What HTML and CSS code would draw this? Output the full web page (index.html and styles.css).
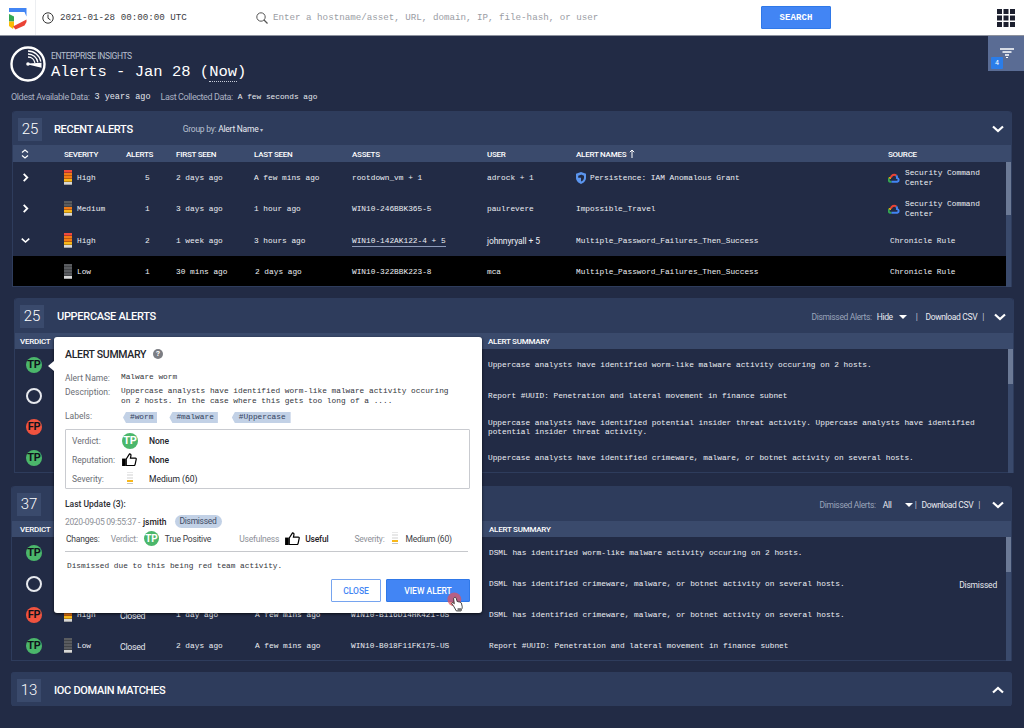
FILE: index.html
```html
<!DOCTYPE html>
<html lang="en">
<head>
<meta charset="utf-8">
<title>Alerts - Enterprise Insights</title>
<link rel="stylesheet" href="styles.css">
</head>
<body>
<svg class="sprite" aria-hidden="true">
  <symbol id="chev-r" viewBox="0 0 10 10"><path d="M3 1l4 4-4 4" fill="none" stroke="#fff" stroke-width="2"/></symbol>
  <symbol id="chev-d" viewBox="0 0 12 8"><path d="M1 1.500l5 4.500 5-4.500" fill="none" stroke="#fff" stroke-width="2.200"/></symbol>
  <symbol id="chev-u" viewBox="0 0 12 8"><path d="M1 6.500l5-4.500 5 4.500" fill="none" stroke="#fff" stroke-width="2.200"/></symbol>
  <symbol id="gcloud" viewBox="0 0 12 10">
    <path d="M3.500 8.800H2.600A2 2 0 0 1 1.300 5.300" fill="none" stroke="#34a853" stroke-width="2"/>
    <path d="M1.300 5.400A2.300 2.300 0 0 1 3 4.700" fill="none" stroke="#fbbc05" stroke-width="2"/>
    <path d="M3 4.800A3.200 3.200 0 0 1 8.300 2.500" fill="none" stroke="#ea4335" stroke-width="2"/>
    <path d="M8.300 2.500A3 3 0 0 1 9 4.900 2 2 0 0 1 9.200 8.800H3.500" fill="none" stroke="#4285f4" stroke-width="2"/>
  </symbol>
  <symbol id="thumb" viewBox="0 0 16 14">
    <path d="M0 6h4v8H0z" fill="#000"/>
    <path d="M4.500 6.500L8 1c1.200 0 1.800.8 1.500 2L9 5.500h5.200c.8 0 1.200.6 1 1.300L14 12.500c-.2.700-.6 1-1.200 1H4.500z" fill="#fff" stroke="#000" stroke-width="1.300"/>
  </symbol>
</svg>

<header class="topbar">
  <div class="logo-cell">
    <svg class="logo" viewBox="0 0 18 22" aria-label="Chronicle logo">
      <path d="M0 0h17.500v4H0z" fill="#4285f4"/>
      <path d="M15.500 4h2v4.500z" fill="#4285f4"/>
      <path d="M0 6l5 2.500v5H0z" fill="#34a853"/>
      <path d="M0 13.500h5v4.500l-1 3-4-3z" fill="#fbbc05"/>
      <path d="M4 18.500l13.500-7v2.500l-2 3.500L6.500 21.500z" fill="#ea4335"/>
    </svg>
  </div>
  <svg class="clock" viewBox="0 0 12 12"><circle cx="6" cy="6" r="5.200" fill="none" stroke="#333" stroke-width="1"/><path d="M6 2.500V6.200L8.500 8" fill="none" stroke="#333" stroke-width="1"/></svg>
  <span class="when">2021-01-28 00:00:00 UTC</span>
  <svg class="lens" viewBox="0 0 12 12"><circle cx="5" cy="5" r="4.200" fill="none" stroke="#555" stroke-width="1"/><path d="M8 8l3.500 3.500" stroke="#555" stroke-width="1.200"/></svg>
  <span class="placeholder">Enter a hostname/asset, URL, domain, IP, file-hash, or user</span>
  <button class="search-btn">SEARCH</button>
  <svg class="apps" viewBox="0 0 18 18"><g fill="#1c1f2e"><rect width="5" height="5"/><rect x="6.500" width="5" height="5"/><rect x="13" width="5" height="5"/><rect y="6.500" width="5" height="5"/><rect x="6.500" y="6.500" width="5" height="5"/><rect x="13" y="6.500" width="5" height="5"/><rect y="13" width="5" height="5"/><rect x="6.500" y="13" width="5" height="5"/><rect x="13" y="13" width="5" height="5"/></g></svg>
</header>

<main class="page">
  <section class="intro">
    <div class="intro-left">
      <div class="headline">
        <svg class="radar" viewBox="0 0 36 36">
          <circle cx="18" cy="18" r="16.500" fill="none" stroke="#fff" stroke-width="2.400"/>
          <circle cx="18" cy="18" r="1.800" fill="#fff"/>
          <path d="M18 17.500L31.500 16.700V21.700L18 18.500z" fill="#fff"/>
          <path d="M18 5A13 13 0 0 1 30.800 15.700M18 8A10 10 0 0 1 27.800 16.300M18 11A7 7 0 0 1 24.900 16.800" fill="none" stroke="#fff" stroke-width="1.300"/>
        </svg>
        <div>
          <div class="eyebrow">ENTERPRISE INSIGHTS</div>
          <h1>Alerts - Jan 28 (<span class="now">Now</span>)</h1>
        </div>
      </div>
      <div class="meta">
        <span class="meta-key">Oldest Available Data:</span><span class="meta-val big">3 years ago</span>
        <span class="meta-key second">Last Collected Data:</span><span class="meta-val">A few seconds ago</span>
      </div>
    </div>
    <div class="filter-btn">
      <svg class="filter-ico" viewBox="0 0 14 10"><path d="M0 1h14M2.500 4h9M5 7h4" stroke="#fff" stroke-width="1.300"/><path d="M6 9.500h2" stroke="#fff"/></svg>
      <span class="filter-badge">4</span>
    </div>
  </section>

  <section class="panel panel-recent">
    <div class="panel-head">
      <span class="count">25</span>
      <h2>RECENT ALERTS</h2>
      <span class="group-by">Group by: <b>Alert Name</b> <span class="tiny-caret">▾</span></span>
      <svg class="head-chev"><use href="#chev-d"/></svg>
    </div>
    <div class="cols cols-recent subhead">
      <span class="sort-cell"><svg class="sort" viewBox="0 0 8 10"><path d="M1 3.500L4 1l3 2.500M1 6.500L4 9l3-2.500" fill="none" stroke="#fff" stroke-width="1.200"/></svg></span>
      <span>SEVERITY</span><span>ALERTS</span><span>FIRST SEEN</span><span>LAST SEEN</span><span>ASSETS</span><span>USER</span>
      <span>ALERT NAMES <svg class="up-arrow" viewBox="0 0 6 9"><path d="M3 9V1M.8 3.200L3 1l2.200 2.200" fill="none" stroke="#fff"/></svg></span>
      <span>SOURCE</span>
    </div>
    <div class="panel-body">
      <div class="rows">
        <div class="cols cols-recent row">
          <span class="exp"><svg class="chev-sm"><use href="#chev-r"/></svg></span>
          <span class="sev-cell"><span class="sev"><i class="r"></i><i class="o"></i><i class="o"></i><i class="y"></i><i class="w"></i></span><span class="m">High</span></span>
          <span class="m num">5</span><span class="m">2 days ago</span><span class="m">A few mins ago</span><span class="m">rootdown_vm + 1</span><span class="m">adrock + 1</span>
          <span class="name-cell"><svg class="shield" viewBox="0 0 10 12"><path d="M5 0l5 1.800v4C10 9 7.500 11 5 12 2.500 11 0 9 0 5.800v-4z" fill="#5b95ee"/><path d="M5 2.500L8 3.700v2C8 7.500 6.500 9 5 9.500z" fill="#222b45"/><path d="M5 5.800H2.200V3.800L5 2.700z" fill="#222b45"/></svg><span class="m">Persistence: IAM Anomalous Grant</span></span>
          <span class="src-cell"><svg class="gc"><use href="#gcloud"/></svg><span class="m wrap">Security Command Center</span></span>
        </div>
        <div class="cols cols-recent row">
          <span class="exp"><svg class="chev-sm"><use href="#chev-r"/></svg></span>
          <span class="sev-cell"><span class="sev"><i class="g"></i><i class="g"></i><i class="o"></i><i class="y"></i><i class="w"></i></span><span class="m">Medium</span></span>
          <span class="m num">1</span><span class="m">3 days ago</span><span class="m">1 hour ago</span><span class="m">WIN10-246BBK365-5</span><span class="m">paulrevere</span>
          <span class="m">Impossible_Travel</span>
          <span class="src-cell"><svg class="gc"><use href="#gcloud"/></svg><span class="m wrap">Security Command Center</span></span>
        </div>
        <div class="cols cols-recent row row-tall">
          <span class="exp"><svg class="chev-sm"><use href="#chev-d"/></svg></span>
          <span class="sev-cell"><span class="sev"><i class="r"></i><i class="o"></i><i class="o"></i><i class="y"></i><i class="w"></i></span><span class="m">High</span></span>
          <span class="m num">2</span><span class="m">1 week ago</span><span class="m">3 hours ago</span><span class="m link">WIN10-142AK122-4 + 5</span><span class="m mix">johnnyryall + 5</span>
          <span class="m">Multiple_Password_Failures_Then_Success</span>
          <span class="m src-plain">Chronicle Rule</span>
        </div>
        <div class="cols cols-recent row row-active">
          <span></span>
          <span class="sev-cell"><span class="sev"><i class="g"></i><i class="g"></i><i class="g"></i><i class="g"></i><i class="w"></i></span><span class="m">Low</span></span>
          <span class="m num">1</span><span class="m">30 mins ago</span><span class="m nudge">2 days ago</span><span class="m">WIN10-322BBK223-8</span><span class="m">mca</span>
          <span class="m">Multiple_Password_Failures_Then_Success</span>
          <span class="m src-plain">Chronicle Rule</span>
        </div>
      </div>
      <div class="scroll"><div class="thumb thumb-recent"></div></div>
    </div>
  </section>

  <section class="panel panel-upper">
    <div class="panel-head">
      <span class="count">25</span>
      <h2>UPPERCASE ALERTS</h2>
      <div class="head-tools">
        <span class="tool-key">Dismissed Alerts:</span><span class="tool-val">Hide</span><span class="caret"></span><span class="pipe">|</span><span class="tool-val">Download CSV</span><span class="pipe near">|</span>
      </div>
      <svg class="head-chev"><use href="#chev-d"/></svg>
    </div>
    <div class="cols cols-upper subhead"><span class="pad-verdict">VERDICT</span><span>ALERT SUMMARY</span></div>
    <div class="panel-body">
      <div class="rows">
        <div class="cols cols-upper row"><span class="verdict-cell"><span class="v tp">TP</span></span><span class="m">Uppercase analysts have identified worm-like malware activity occuring on 2 hosts.</span></div>
        <div class="cols cols-upper row"><span class="verdict-cell"><span class="v none"></span></span><span class="m">Report #UUID: Penetration and lateral movement in finance subnet</span></div>
        <div class="cols cols-upper row"><span class="verdict-cell"><span class="v fp">FP</span></span><span class="m wrap-long">Uppercase analysts have identified potential insider threat activity. Uppercase analysts have identified potential insider threat activity.</span></div>
        <div class="cols cols-upper row"><span class="verdict-cell"><span class="v tp">TP</span></span><span class="m">Uppercase analysts have identified crimeware, malware, or botnet activity on several hosts.</span></div>
      </div>
      <div class="scroll"><div class="thumb thumb-list"></div></div>
    </div>
  </section>

  <section class="panel panel-dsml">
    <div class="panel-head">
      <span class="count">37</span>
      <div class="head-tools">
        <span class="tool-key">Dimissed Alerts:</span><span class="tool-val wide">All</span><span class="caret tight"></span><span class="pipe tight">|</span><span class="tool-val">Download CSV</span><span class="pipe near">|</span>
      </div>
      <svg class="head-chev"><use href="#chev-d"/></svg>
    </div>
    <div class="cols cols-dsml subhead"><span class="pad-verdict-d">VERDICT</span><span></span><span></span><span></span><span></span><span></span><span>ALERT SUMMARY</span><span></span></div>
    <div class="panel-body">
      <div class="rows">
        <div class="cols cols-dsml row"><span class="verdict-cell-d"><span class="v tp">TP</span></span><span></span><span></span><span></span><span></span><span></span><span class="m">DSML has identified worm-like malware activity occuring on 2 hosts.</span><span></span></div>
        <div class="cols cols-dsml row"><span class="verdict-cell-d"><span class="v none"></span></span><span></span><span></span><span></span><span></span><span></span><span class="m">DSML has identified crimeware, malware, or botnet activity on several hosts.</span><span class="status-end">Dismissed</span></div>
        <div class="cols cols-dsml row"><span class="verdict-cell-d"><span class="v fp">FP</span></span><span class="sev-cell"><span class="sev"><i class="r"></i><i class="o"></i><i class="o"></i><i class="y"></i><i class="w"></i></span><span class="m">High</span></span><span class="s">Closed</span><span class="m">1 day ago</span><span class="m">A few mins ago</span><span class="m">WIN10-B116D14HK421-US</span><span class="m">DSML has identified crimeware, malware, or botnet activity on several hosts.</span><span></span></div>
        <div class="cols cols-dsml row"><span class="verdict-cell-d"><span class="v tp">TP</span></span><span class="sev-cell"><span class="sev"><i class="g"></i><i class="g"></i><i class="g"></i><i class="g"></i><i class="w"></i></span><span class="m">Low</span></span><span class="s">Closed</span><span class="m">2 days ago</span><span class="m">A few mins ago</span><span class="m">WIN10-B018F11FK175-US</span><span class="m">Report #UUID: Penetration and lateral movement in finance subnet</span><span></span></div>
      </div>
      <div class="scroll"><div class="thumb thumb-list"></div></div>
    </div>
  </section>

  <section class="panel panel-ioc">
    <div class="panel-head">
      <span class="count">13</span>
      <h2>IOC DOMAIN MATCHES</h2>
      <svg class="head-chev"><use href="#chev-u"/></svg>
    </div>
  </section>

  <aside class="modal">
    <div class="modal-title"><h3>ALERT SUMMARY</h3><span class="help">?</span></div>
    <dl class="facts">
      <dt>Alert Name:</dt><dd class="mono">Malware worm</dd>
      <dt>Description:</dt><dd class="mono">Uppercase analysts have identified worm-like malware activity occuring on 2 hosts. In the case where this gets too long of a ....</dd>
      <dt class="labels-key">Labels:</dt><dd class="tags"><span class="tag">#worm</span><span class="tag">#malware</span><span class="tag">#Uppercase</span></dd>
    </dl>
    <div class="summary-box">
      <span class="sb-key">Verdict:</span><span class="v tp inv">TP</span><b>None</b>
      <span class="sb-key">Reputation:</span><svg class="thumb-ico"><use href="#thumb"/></svg><b>None</b>
      <span class="sb-key">Severity:</span><span class="sev light"><i class="l"></i><i class="l"></i><i class="l"></i><i class="y"></i><i class="gr"></i></span><b class="reg">Medium (60)</b>
    </div>
    <div class="last-update">Last Update (3):</div>
    <div class="update-line"><span class="stamp">2020-09-05 09:55:37 -</span><b>jsmith</b><span class="pill">Dismissed</span></div>
    <div class="changes">
      <span class="ch-label">Changes:</span>
      <span class="ch-key k-verdict">Verdict:</span><span class="v tp inv">TP</span><span class="ch-val">True Positive</span>
      <span class="ch-key k-use">Usefulness</span><svg class="thumb-ico"><use href="#thumb"/></svg><b class="ch-strong">Useful</b>
      <span class="ch-key k-sev">Severity:</span><span class="sev light"><i class="l"></i><i class="l"></i><i class="l"></i><i class="y"></i><i class="gr"></i></span><span class="ch-val wide-gap">Medium (60)</span>
    </div>
    <p class="note">Dismissed due to this being red team activity.</p>
    <div class="actions">
      <button class="btn-outline">CLOSE</button>
      <button class="btn-solid">VIEW ALERT</button>
    </div>
    <svg class="cursor" viewBox="0 0 26 26" aria-hidden="true">
      <circle cx="9" cy="8" r="7.500" fill="#e2505a" fill-opacity=".72"/>
      <path d="M9 6c1-.6 1.800 0 2 .8l1.200 3.700c.6-.5 1.300-.2 1.500.4.500-.4 1.200-.2 1.500.4.500-.3 1.200 0 1.400.6l.9 3.600c.3 1.300-.1 2.600-.8 3.600l-.4 1.400h-5.100l-3-5.200-1.900-2.500c-.5-1 .6-1.800 1.500-1.100l1.200 1.100L8.300 7.600C8.100 7 8.400 6.300 9 6z" fill="#fff" stroke="#222" stroke-width=".9"/>
      <rect x="12.500" y="17.500" width="4" height="3" fill="#777"/>
    </svg>
  </aside>
</main>
</body>
</html>
```
FILE: styles.css
```css
* { box-sizing: border-box; }
html, body { margin: 0; height: 100%; }
body {
  width: 1024px;
  height: 728px;
  overflow: hidden;
  background: #222b45;
  color: #eef0f5;
  font-family: Roboto, "Noto Sans", sans-serif;
  font-size: 9px;
}
.sprite { display: none; }
h1, h2, h3, p, dl, dd, dt { margin: 0; padding: 0; }
button { font-family: inherit; cursor: pointer; }

/* top bar */
.topbar {
  height: 36px;
  background: #fff;
  border-bottom: 1px solid #8d929e;
  display: flex;
  align-items: center;
  font-family: "Liberation Mono", monospace;
  font-size: 9.200px;
}
.logo-cell {
  width: 36px;
  height: 35px;
  border-right: 1px solid #eceef1;
  padding: 8px 0 0 9px;
}
.logo { width: 18px; height: 22px; display: block; }
.clock { width: 12px; height: 12px; margin-left: 6px; }
.when { margin-left: 6px; width: 196px; color: #3b3d44; }
.lens { width: 12px; height: 12px; }
.placeholder { margin-left: 5px; width: 488px; color: #9a9da4; white-space: nowrap; }
.search-btn {
  width: 70px;
  height: 23px;
  border: 1px solid #2f78e8;
  background: #4285f4;
  color: #fff;
  font-size: 9px;
  font-weight: 700;
  letter-spacing: .1px;
  border-radius: 1px;
  padding: 0;
}
.apps { width: 18px; height: 18px; margin-left: 166px; }

/* page */
.page { position: relative; padding-left: 12px; }
.intro { height: 75px; margin-left: -12px; display: flex; justify-content: space-between; }
.intro-left { padding: 10px 0 0 10px; }
.headline { display: flex; gap: 5px; height: 36px; }
.radar { width: 36px; height: 36px; display: block; }
.eyebrow { margin-top: 5px; font-size: 8.500px; letter-spacing: -.4px; line-height: 10px; color: #b9c0d0; font-weight: 400; }
h1 {
  margin-top: 2px;
  font: 400 15.500px/18px "Liberation Mono", monospace;
  color: #fff;
}
.now { border-bottom: 1px dotted #c7ccd8; }
.meta { margin: 10px 0 0 1px; display: flex; align-items: center; height: 10px; white-space: nowrap; }
.meta-key { color: #aab1c2; font-size: 9px; font-weight: 400; letter-spacing: -.4px; }
.meta-val { margin-left: 5px; font: 7.800px "Liberation Mono", monospace; color: #e6e8ee; }
.meta-val.big { font-size: 8.500px; }
.second { margin-left: 10px; }
.filter-btn { position: relative; width: 36px; height: 35px; background: #5a6c94; }
.filter-ico { position: absolute; left: 12px; top: 12px; width: 14px; height: 10px; }
.filter-badge {
  position: absolute;
  left: 3px;
  top: 21px;
  width: 12px;
  height: 12px;
  background: #2b7de9;
  border-radius: 1px;
  text-align: center;
  font-size: 7px;
  line-height: 12px;
  color: #fff;
}

/* panels */
.panel { width: 1000px; background: #222b45; border: 1px solid #2e3c5c; border-top: 0; border-radius: 3px 3px 0 0; }
.panel-recent { height: 176px; }
.panel-upper { margin: 11px 0 0 2px; height: 175px; }
.panel-dsml { margin: 13px 0 0 -1px; width: 1001px; height: 175px; }
.panel-ioc { margin: 11px 0 0 -1px; width: 1001px; height: 34px; background: #2e3c5c; border-radius: 3px; }
.panel-head {
  height: 34px;
  background: #2e3c5c;
  display: flex;
  align-items: center;
  padding: 2px 5px 0;
  border-radius: 3px 3px 0 0;
}
.panel-upper .panel-head, .panel-dsml .panel-head { height: 35px; }
.count {
  width: 24px;
  height: 23px;
  background: #3a4a6c;
  text-align: center;
  font-size: 15px;
  line-height: 23px;
  font-weight: 300;
  color: #fff;
}
h2 { margin-left: 13px; font-size: 11px; font-weight: 500; color: #fff; letter-spacing: -.3px; white-space: nowrap; }
.panel-recent h2 { margin-left: 12px; }
.group-by { margin-left: 50px; color: #b9c0d0; font-size: 8.500px; letter-spacing: -.25px; }
.group-by b { color: #e8eaf0; font-weight: 400; }
.tiny-caret { font-size: 6px; }
.head-chev { margin-left: auto; margin-right: 2px; width: 12px; height: 8px; flex: none; }
.head-tools { margin-left: auto; display: flex; align-items: center; font-size: 8.500px; letter-spacing: -.35px; color: #e8eaf0; margin-right: 10px; }
.head-tools + .head-chev { margin-left: 0; }
.panel-dsml .head-tools { margin-right: 12px; }
.tool-key { color: #9aa4ba; margin-right: 5px; }
.tool-val.wide { width: 14px; margin-left: 2px; }
.caret { width: 0; height: 0; margin: 0 9px 0 6px; border: 4px solid transparent; border-top: 4px solid #fff; border-bottom: 0; }
.caret.tight { margin: 0 2px 0 8px; }
.pipe { margin: 0 8px 0 0; color: #c5cbd8; }
.pipe.near { margin: 0 0 0 5px; }
.pipe.tight { margin: 0 5px 0 0; }

.cols { display: grid; align-items: center; }
.cols-recent { grid-template-columns: 51px 62px 50px 78px 98px 135px 89px 312px 1fr; }
.cols-upper { grid-template-columns: 473px 1fr; }
.cols-dsml { grid-template-columns: 52px 57px 55px 79px 96px 138px 1fr 60px; }
.subhead {
  height: 17px;
  padding-top: 1px;
  background: #3a4a6c;
  font-size: 8px;
  font-weight: 500;
  letter-spacing: -.25px;
  color: #fff;
}
.panel-upper .subhead, .panel-dsml .subhead { height: 16px; }
.pad-verdict { padding-left: 5px; }
.pad-verdict-d { padding-left: 8px; }
.sort-cell { padding-left: 8px; display: flex; }
.sort { width: 8px; height: 10px; }
.up-arrow { width: 6px; height: 9px; vertical-align: -1px; margin-left: 1px; }

.panel-body { display: flex; height: 125px; }
.panel-upper .panel-body, .panel-dsml .panel-body { height: 124px; }
.rows { flex: 1; min-width: 0; }
.row { height: 31px; color: #e8eaf0; }
.row-tall { height: 32px; }
.row-active { height: 30px; background: #000; }
.scroll { width: 5px; background: #3a4a6c; flex: none; }
.thumb { background: #6c7a96; width: 100%; }
.thumb-recent { height: 53px; }
.thumb-list { height: 35px; }

.m { margin-top: 3px; font: 7.800px/9.500px "Liberation Mono", monospace; white-space: nowrap; color: #eceef3; }
.s { margin: 3px 0 0 -1px; font-size: 8.800px; letter-spacing: -.3px; color: #e3e6ec; }
.num { padding-left: 19px; }
.nudge { margin-left: 1px; }
.exp { padding-left: 8px; display: flex; }
.chev-sm { width: 9px; height: 9px; }
.sev-cell { display: flex; align-items: center; gap: 5px; }
.sev { display: flex; flex-direction: column; width: 8px; height: 15px; flex: none; }
.sev i { display: block; height: 3px; border-bottom: 1px solid rgba(0,0,0,.25); }
.sev .r { background: #ee4a3d; }
.sev .o { background: #f47b16; }
.sev .y { background: #f8b81c; }
.sev .w { background: #d8d8d8; }
.sev .g { background: #5a5c60; }
.sev.light { width: 6px; height: 14px; }
.sev.light i { height: 2.800px; border-bottom: 1px solid #fff; }
.sev .l { background: #e8e8e8; }
.sev .gr { background: #c4c4c4; }
.name-cell { display: flex; align-items: center; gap: 4px; }
.shield { width: 10px; height: 12px; flex: none; }
.src-cell { display: flex; align-items: center; gap: 5px; }
.gc { width: 12px; height: 10px; flex: none; }
.wrap { white-space: normal; width: 90px; line-height: 10px; margin-top: 1px; }
.src-plain { padding-left: 2px; }
.link { border-bottom: 1px solid #8d9ab8; justify-self: start; line-height: 9px; }
.mix { font-family: Roboto, sans-serif; font-size: 8.500px; letter-spacing: -.1px; }
.verdict-cell { padding-left: 11px; }
.verdict-cell-d { padding-left: 14px; }
.v {
  display: block;
  width: 16px;
  height: 16px;
  border-radius: 50%;
  text-align: center;
  font-size: 11px;
  font-weight: 700;
  letter-spacing: -.3px;
  line-height: 16px;
  color: #10131c;
}
.tp { background: #4bb76b; }
.fp { background: #f0533f; }
.none { border: 2px solid #e7e9ee; }
.v.inv { color: #fff; }
.wrap-long { white-space: normal; width: 510px; }
.status-end { justify-self: end; margin-top: 2px; padding-right: 9px; font-size: 8.500px; letter-spacing: -.2px; color: #e8eaf0; }

/* modal */
.modal {
  position: absolute;
  left: 54px;
  top: 301px;
  width: 428px;
  height: 276px;
  background: #fff;
  border-radius: 3px;
  padding: 10px 12px 0 11px;
  box-shadow: 0 1px 3px rgba(0,0,0,.7);
  color: #4e5158;
}
.modal::before {
  content: "";
  position: absolute;
  left: -6px;
  top: 24px;
  border: 5.500px solid transparent;
  border-right: 6px solid #fff;
  border-left: 0;
}
.modal-title { display: flex; align-items: center; gap: 7px; height: 14px; }
h3 { font-size: 10.500px; font-weight: 500; color: #22242a; letter-spacing: -.3px; }
.help {
  width: 10px; height: 10px; border-radius: 50%;
  background: #7b7d83; color: #fff;
  text-align: center; font-size: 8px; line-height: 10px; font-weight: 700;
}
.facts { margin-top: 12px; display: grid; grid-template-columns: 56px 1fr; row-gap: 4px; font-size: 8.500px; line-height: 10px; color: #6a6d74; }
.labels-key { margin-top: 1px; }
.mono { font: 7.800px/9.500px "Liberation Mono", monospace; color: #33353b; width: 335px; }
.tags { display: flex; align-items: center; height: 11px; margin-top: 2px; }
.tag {
  height: 11px;
  margin-left: 2px;
  margin-right: 10px;
  padding: 0 4px 0 7px;
  background: #c2d1e6;
  font: 7.800px/11px "Liberation Mono", monospace;
  color: #33415c;
  clip-path: polygon(3px 0, 100% 0, 100% 100%, 3px 100%, 0 50%);
}
.tag:last-child { margin-left: 4px; padding-right: 5px; }
.summary-box {
  margin-top: 6px;
  height: 60px;
  width: 405px;
  border: 1px solid #c9cbd0;
  border-radius: 1px;
  display: grid;
  grid-template-columns: 50px 27px 1fr;
  grid-auto-rows: 19px;
  align-items: center;
  padding: 1px 0 0 6px;
  font-size: 8.500px;
  color: #6a6d74;
}
.summary-box b { color: #22242a; font-weight: 500; }
.summary-box .reg { font-weight: 400; }
.summary-box .sev { margin-left: 5px; }
.thumb-ico { width: 15px; height: 13px; flex: none; }
.last-update { margin-top: 10px; font-size: 8.500px; line-height: 10px; font-weight: 500; color: #2b2d33; }
.update-line { margin-top: 6px; display: flex; align-items: center; height: 13px; font-size: 8.500px; }
.stamp { color: #8d9097; letter-spacing: -.35px; }
.update-line b { margin-left: 3px; color: #1f2126; font-weight: 500; }
.pill { margin-left: 8px; height: 13px; padding: 0 5px; border-radius: 7px; background: #c2d1e6; line-height: 13px; letter-spacing: -.3px; color: #3f4b63; }
.changes { margin-top: 3px; display: flex; align-items: center; height: 15px; font-size: 8.500px; letter-spacing: -.2px; padding-left: 1px; color: #3e4046; }
.ch-key { color: #8d9097; }
.k-verdict { margin-left: 11px; }
.k-use { margin-left: 28px; }
.k-sev { margin-left: 26px; }
.changes .v { margin-left: 6px; width: 15px; height: 15px; line-height: 15px; font-size: 10px; }
.changes .thumb-ico { margin-left: 6px; }
.changes .sev { margin-left: 7px; }
.ch-val { margin-left: 6px; }
.ch-val.wide-gap { margin-left: 8px; }
.ch-strong { margin-left: 5px; color: #1f2126; font-weight: 500; }
.note {
  margin-top: 5px;
  padding: 9px 0 0 2px;
  border-top: 1px solid #c6c8cc;
  width: 403px;
  font: 7.800px/10px "Liberation Mono", monospace;
  color: #33353b;
}
.actions { margin-top: 8px; display: flex; justify-content: flex-end; gap: 5px; }
.btn-outline, .btn-solid { height: 23px; font-size: 8.500px; font-weight: 500; border-radius: 1px; padding: 0; letter-spacing: 0; }
.btn-outline { width: 50px; background: #fff; border: 1px solid #76a4ef; color: #4285f4; }
.btn-solid { width: 84px; background: #4285f4; border: 1px solid #2f78e8; color: #fff; }
.cursor { position: absolute; left: 392px; top: 255px; width: 24px; height: 24px; }
```
